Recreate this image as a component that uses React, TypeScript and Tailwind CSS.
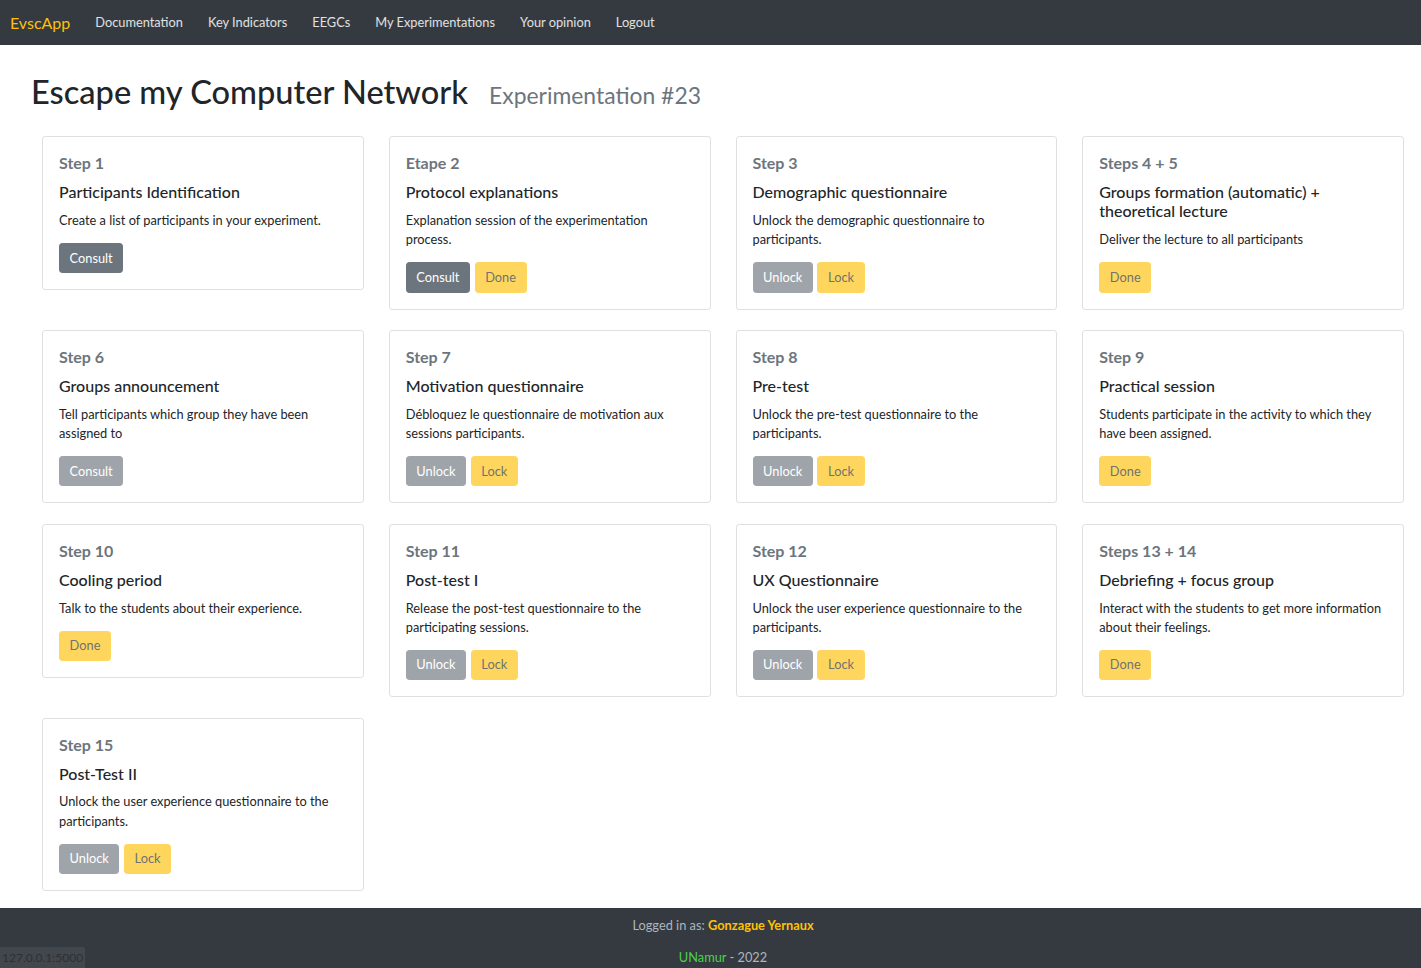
type Btn = { label: string; kind: 'dark' | 'grey' | 'yellow' };

type Step = {
  step: string;
  title: string;
  text: string;
  buttons: Btn[];
};

const consult: Btn = { label: 'Consult', kind: 'dark' };
const consultOff: Btn = { label: 'Consult', kind: 'grey' };
const unlock: Btn = { label: 'Unlock', kind: 'grey' };
const lock: Btn = { label: 'Lock', kind: 'yellow' };
const done: Btn = { label: 'Done', kind: 'yellow' };

const steps: Step[] = [
  { step: 'Step 1', title: 'Participants Identification', text: 'Create a list of participants in your experiment.', buttons: [consult] },
  { step: 'Etape 2', title: 'Protocol explanations', text: 'Explanation session of the experimentation process.', buttons: [consult, done] },
  { step: 'Step 3', title: 'Demographic questionnaire', text: 'Unlock the demographic questionnaire to participants.', buttons: [unlock, lock] },
  { step: 'Steps 4 + 5', title: 'Groups formation (automatic) + theoretical lecture', text: 'Deliver the lecture to all participants', buttons: [done] },
  { step: 'Step 6', title: 'Groups announcement', text: 'Tell participants which group they have been assigned to', buttons: [consultOff] },
  { step: 'Step 7', title: 'Motivation questionnaire', text: 'Débloquez le questionnaire de motivation aux sessions participants.', buttons: [unlock, lock] },
  { step: 'Step 8', title: 'Pre-test', text: 'Unlock the pre-test questionnaire to the participants.', buttons: [unlock, lock] },
  { step: 'Step 9', title: 'Practical session', text: 'Students participate in the activity to which they have been assigned.', buttons: [done] },
  { step: 'Step 10', title: 'Cooling period', text: 'Talk to the students about their experience.', buttons: [done] },
  { step: 'Step 11', title: 'Post-test I', text: 'Release the post-test questionnaire to the participating sessions.', buttons: [unlock, lock] },
  { step: 'Step 12', title: 'UX Questionnaire', text: 'Unlock the user experience questionnaire to the participants.', buttons: [unlock, lock] },
  { step: 'Steps 13 + 14', title: 'Debriefing + focus group', text: 'Interact with the students to get more information about their feelings.', buttons: [done] },
  { step: 'Step 15', title: 'Post-Test II', text: 'Unlock the user experience questionnaire to the participants.', buttons: [unlock, lock] },
];

const navLinks = ['Documentation', 'Key Indicators', 'EEGCs', 'My Experimentations', 'Your opinion', 'Logout'];

function StepButton({ btn }: { btn: Btn }) {
  // disabled bootstrap buttons are the same colour at 65% opacity
  const cls =
    btn.kind === 'dark'
      ? 'bg-[#6c757d] border-[#6c757d] text-white'
      : btn.kind === 'grey'
        ? 'bg-[#6c757d] border-[#6c757d] text-white opacity-65'
        : 'bg-[#ffc107] border-[#ffc107] text-[#212529] opacity-65';
  return (
    <button type="button" className={`h-[30.4px] px-[9.6px] border rounded-[3.2px] text-[12.8px] leading-[19.2px] ${cls}`}>
      {btn.label}
    </button>
  );
}

function StepCard({ s }: { s: Step }) {
  return (
    <div className="border border-[#dfdfdf] rounded-[3.2px] bg-white p-4">
      <h6 className="text-[16px] leading-[19.2px] font-bold text-[#6c757d] mb-[9.6px]">{s.step}</h6>
      <h5 className="text-[16px] leading-[19.2px] font-medium text-[#212529] mb-[9.6px]">{s.title}</h5>
      <p className="text-[12.8px] leading-[19.2px] text-[#212529] mb-[12.8px]">{s.text}</p>
      <div className="flex gap-[4.5px]">
        {s.buttons.map((b, i) => (
          <StepButton key={i} btn={b} />
        ))}
      </div>
    </div>
  );
}

export default function App() {
  return (
    <div className="relative h-[968px] overflow-hidden bg-white text-[#212529] font-['Lato',sans-serif]">
      <nav className="h-[45px] bg-[#343a40] flex items-center pl-[10px]">
        <span className="text-[16px] text-[#ffc107] mr-[25px]">EvscApp</span>
        <div className="flex gap-[25px]">
          {navLinks.map((l) => (
            <a key={l} href="#" className="text-[12.8px] text-white/85">
              {l}
            </a>
          ))}
        </div>
      </nav>

      <div className="pl-[31px] mt-[28px] flex items-baseline">
        <h1 className="text-[32.6px] leading-[38.4px] font-medium">Escape my Computer Network</h1>
        <span className="ml-[21px] text-[22.9px] text-[#6c757d]">Experimentation #23</span>
      </div>

      <div className="mt-[24px] pl-[42px] pr-[17px] grid grid-cols-4 gap-x-[25px] gap-y-[20.6px] items-start">
        {steps.map((s) => (
          <StepCard key={s.step} s={s} />
        ))}
      </div>

      <footer className="mt-[17px] h-[60px] bg-[#343a40] pl-[25px] pt-[8.4px] text-center text-[12.8px] leading-[19.2px] text-[#adb5bd]">
        <p className="mb-[12.8px]">
          Logged in as: <span className="font-bold text-[#ffc107]">Gonzague Yernaux</span>
        </p>
        <p>
          <span className="text-[#4cd14c]">UNamur</span> - 2022
        </p>
      </footer>

      {/* browser status bubble */}
      <div className="absolute left-0 bottom-0 h-[21px] px-[2px] rounded-tr-[3px] bg-[#42474d] text-[12px] leading-[21px] text-[#2c3035]">
        127.0.0.1:5000
      </div>
    </div>
  );
}
